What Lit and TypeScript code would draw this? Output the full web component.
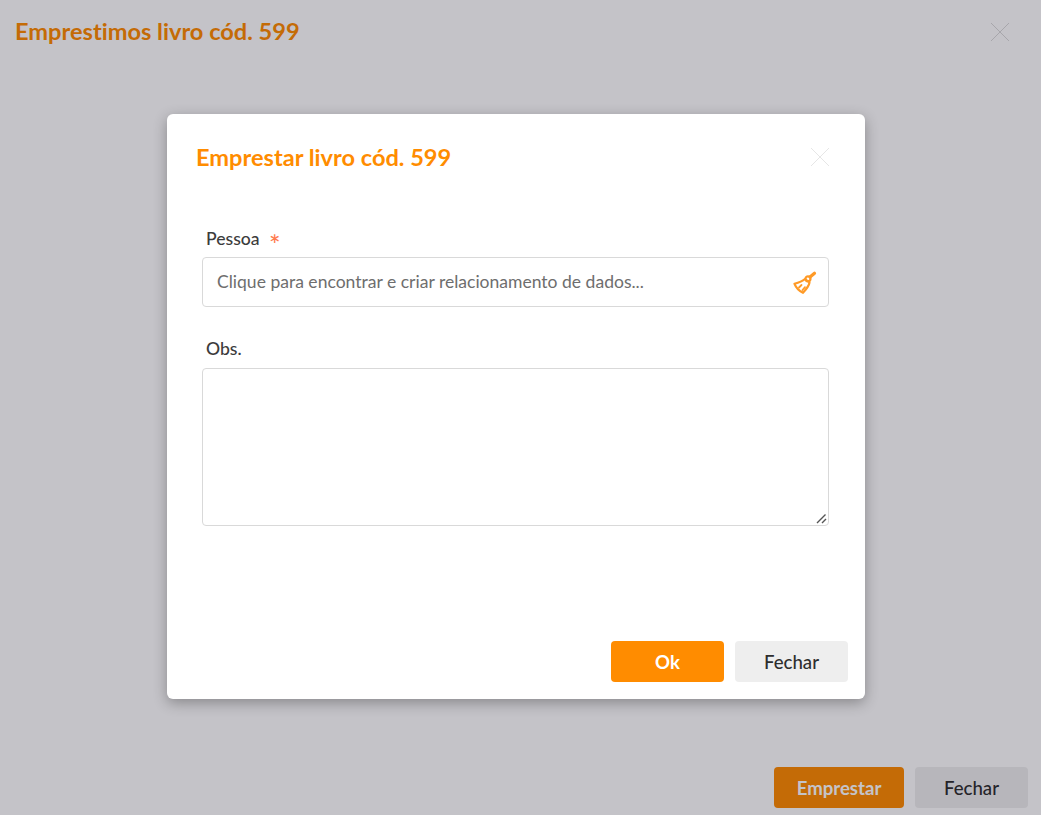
import { LitElement, html, css } from "lit";
import { customElement } from "lit/decorators.js";

const closeIcon = html`<svg viewBox="0 0 20 20" width="20" height="20" fill="none" stroke="currentColor" stroke-width="1"><path d="M1 1 L19 19 M19 1 L1 19"/></svg>`;

@customElement("app-root")
export class AppRoot extends LitElement {
  static styles = css`
    :host {
      display: block;
      position: relative;
      width: 1041px;
      height: 815px;
      overflow: hidden;
      background: #fff;
      font-family: "Lato", "Noto Sans", sans-serif;
      font-variant-ligatures: none;
      color: #3c3c3c;
    }
    .page {
      height: 100%;
      display: flex;
      flex-direction: column;
      box-sizing: border-box;
      padding: 11px 13px 7px 15px;
    }
    .head {
      display: flex;
      justify-content: space-between;
      align-items: center;
      height: 40px;
      padding-right: 18px;
    }
    .page-title {
      font-size: 23.6px;
      font-weight: 700;
      color: #ff8c00;
      white-space: nowrap;
    }
    .close {
      display: block;
      width: 20px;
      height: 20px;
      color: #d9d9d9;
    }
    .head .close { margin-top: 2px; }
    .spacer { flex: 1; }
    .actions {
      display: flex;
      justify-content: flex-end;
      gap: 11px;
    }
    button {
      font: inherit;
      font-size: 18.6px;
      height: 41px;
      border: 0;
      border-radius: 4px;
      padding: 0;
      cursor: pointer;
      width: 113px;
    }
    .primary { background: #ff8c00; color: #fff; font-weight: 700; }
    .secondary { background: #eee; color: #2e2e2e; font-weight: 500; }
    .page .primary { width: 130px; }
    .overlay {
      position: absolute;
      inset: 0;
      background: rgba(9, 5, 26, 0.24);
      display: flex;
      align-items: flex-start;
      justify-content: center;
      padding: 114px 0 0 0;
      box-sizing: border-box;
    }
    .modal {
      width: 698px;
      height: 585px;
      margin-left: -9px;
      box-sizing: border-box;
      background: #fff;
      border-radius: 6px;
      box-shadow: 0 4px 14px rgba(0, 0, 0, 0.3);
      display: flex;
      flex-direction: column;
      padding: 24px 17px 17px 29px;
    }
    .modal-head {
      display: flex;
      justify-content: space-between;
      align-items: center;
      height: 38px;
      padding-right: 18px;
    }
    .modal-title {
      font-size: 23.6px;
      font-weight: 700;
      color: #ff8c00;
      white-space: nowrap;
    }
    .modal .close { color: #e6e6e6; }
    form {
      display: flex;
      flex-direction: column;
      padding: 0 19px 0 6px;
      margin-top: 53px;
    }
    label {
      display: block;
      font-size: 17.6px;
      font-weight: 500;
      line-height: 20px;
      padding-left: 4px;
      margin-bottom: 9px;
      color: #3c3c3c;
    }
    .pessoa { margin-bottom: 8px; }
    .req { color: #ff7a4d; margin-left: 5px; font-size: 27px; line-height: 0; vertical-align: -10px; }
    .input {
      height: 50px;
      box-sizing: border-box;
      border: 1px solid #d9d9d9;
      border-radius: 4px;
      display: flex;
      align-items: center;
      justify-content: space-between;
      padding: 0 11px 0 14px;
      font-size: 17.55px;
      color: #6e6e6e;
      margin-bottom: 32px;
    }
    .input span { margin-top: -2px; }
    .input svg { display: block; }
    .area-wrap {
      position: relative;
      height: 158px;
    }
    .area {
      display: block;
      height: 100%;
      box-sizing: border-box;
      border: 1px solid #d9d9d9;
      border-radius: 4px;
      width: 100%;
      padding: 0;
      margin: 0;
      outline: 0;
      resize: none;
      font: inherit;
    }
    .grip {
      position: absolute;
      right: 2px;
      bottom: 2px;
      display: block;
      pointer-events: none;
    }
    .spacer-m { flex: 1; }
  `;

  render() {
    return html`
      <div class="page">
        <div class="head">
          <div class="page-title">Emprestimos livro cód. 599</div>
          <span class="close">${closeIcon}</span>
        </div>
        <div class="spacer"></div>
        <div class="actions">
          <button class="primary">Emprestar</button>
          <button class="secondary">Fechar</button>
        </div>
      </div>
      <div class="overlay">
        <div class="modal">
          <div class="modal-head">
            <div class="modal-title">Emprestar livro cód. 599</div>
            <span class="close">${closeIcon}</span>
          </div>
          <form>
            <label class="pessoa">Pessoa <span class="req">*</span></label>
            <div class="input">
              <span>Clique para encontrar e criar relacionamento de dados...</span>
              <svg viewBox="0 0 24 24" width="24" height="24" fill="none" stroke="#ff9a26" stroke-width="2.2" stroke-linejoin="round" stroke-linecap="round">
                <path d="M17 7 L21.5 3.2" stroke-width="3.2" />
                <circle cx="15" cy="8.8" r="2.5" />
                <path d="M12 9 C9.5 11 6 12.5 1.5 13.8 C3 17.5 6 20.8 10 22.8 C13 19.5 16 16 16.5 12.5 Z" />
                <path d="M6 17.5 L8.5 15 M9.5 20 L12 17.2" stroke-width="1.8" />
              </svg>
            </div>
            <label>Obs.</label>
            <div class="area-wrap">
              <textarea class="area"></textarea>
              <svg class="grip" viewBox="0 0 11 11" width="11" height="11" fill="none" stroke="#555" stroke-width="1.4"><path d="M1 10 L9.5 1.5 M6 10 L10 6"/></svg>
            </div>
          </form>
          <div class="spacer-m"></div>
          <div class="actions">
            <button class="primary">Ok</button>
            <button class="secondary">Fechar</button>
          </div>
        </div>
      </div>
    `;
  }
}
